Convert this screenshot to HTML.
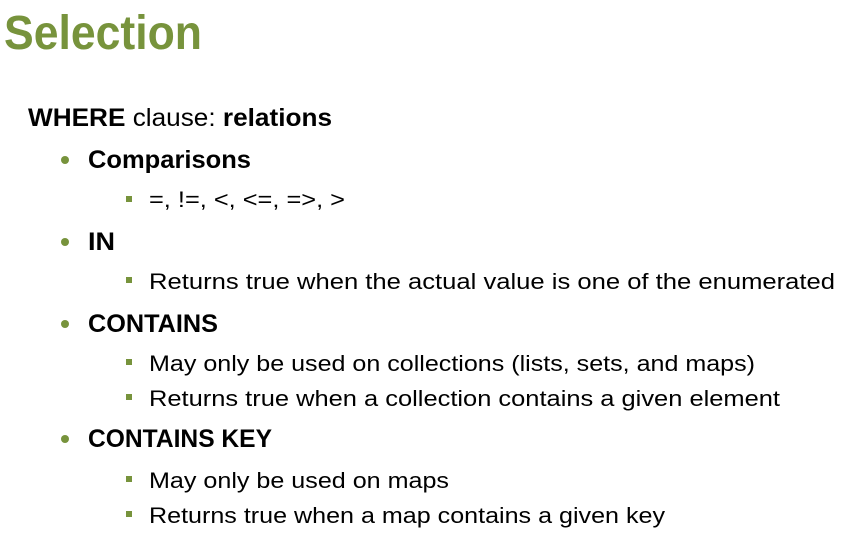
<!DOCTYPE html>
<html><head><meta charset="utf-8"><style>
html,body{margin:0;padding:0;background:#fff;}
svg{display:block}
text{font-family:"Liberation Sans",sans-serif;fill:#000}
.b{font-weight:bold}
.l1{font-size:25px}
.l2{font-size:22px}
</style></head><body>
<svg width="854" height="549" viewBox="0 0 854 549">
<text x="4" y="49" class="b" style="font-size:48px;fill:#77933c" textLength="198" lengthAdjust="spacingAndGlyphs">Selection</text>
<text x="28" y="126" class="l1" textLength="304" lengthAdjust="spacingAndGlyphs"><tspan class="b">WHERE</tspan> clause: <tspan class="b">relations</tspan></text>
<g fill="#77933c">
<circle cx="65" cy="160" r="4"/><circle cx="65" cy="242" r="4"/><circle cx="65" cy="324" r="4"/><circle cx="65" cy="439" r="4"/>
<rect x="126" y="196" width="6" height="6"/><rect x="126" y="277" width="6" height="6"/><rect x="126" y="359" width="6" height="6"/><rect x="126" y="394" width="6" height="6"/><rect x="126" y="476" width="6" height="6"/><rect x="126" y="511" width="6" height="6"/>
</g>
<text x="88" y="168" class="l1 b" textLength="163" lengthAdjust="spacingAndGlyphs">Comparisons</text>
<text x="149" y="207" class="l2" textLength="196" lengthAdjust="spacingAndGlyphs">=, !=, &lt;, &lt;=, =&gt;, &gt;</text>
<text x="88" y="250" class="l1 b" textLength="27" lengthAdjust="spacingAndGlyphs">IN</text>
<text x="149" y="289" class="l2" textLength="686" lengthAdjust="spacingAndGlyphs">Returns true when the actual value is one of the enumerated</text>
<text x="88" y="332" class="l1 b" textLength="130" lengthAdjust="spacingAndGlyphs">CONTAINS</text>
<text x="149" y="371" class="l2" textLength="606" lengthAdjust="spacingAndGlyphs">May only be used on collections (lists, sets, and maps)</text>
<text x="149" y="406" class="l2" textLength="631" lengthAdjust="spacingAndGlyphs">Returns true when a collection contains a given element</text>
<text x="88" y="447" class="l1 b" textLength="184" lengthAdjust="spacingAndGlyphs">CONTAINS KEY</text>
<text x="149" y="488" class="l2" textLength="300" lengthAdjust="spacingAndGlyphs">May only be used on maps</text>
<text x="149" y="523" class="l2" textLength="516" lengthAdjust="spacingAndGlyphs">Returns true when a map contains a given key</text>
</svg>
</body></html>
